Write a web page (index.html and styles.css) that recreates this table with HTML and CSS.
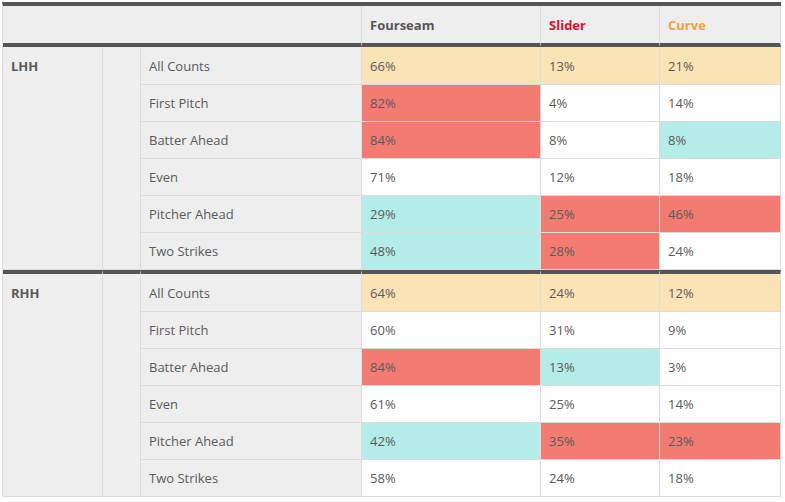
FILE: index.html
```html
<!DOCTYPE html>
<html>
<head>
<meta charset="utf-8">
<link rel="stylesheet" href="styles.css">
</head>
<body>
<div class="wrap">
<table class="grid">
  <colgroup>
    <col class="c-hand"><col class="c-blank"><col class="c-count"><col class="c-p1"><col class="c-p2"><col class="c-p3">
  </colgroup>
  <thead>
    <tr>
      <th class="gray" colspan="3"></th>
      <th class="pitch fourseam">Fourseam</th>
      <th class="pitch slider">Slider</th>
      <th class="pitch curve">Curve</th>
    </tr>
  </thead>
  <tbody class="group">
    <tr class="first"><td class="hand gray" rowspan="6">LHH</td><td class="gray" rowspan="6"></td><td class="count gray">All Counts</td><td class="yel">66%</td><td class="yel">13%</td><td class="yel">21%</td></tr>
    <tr><td class="count gray">First Pitch</td><td class="red">82%</td><td>4%</td><td>14%</td></tr>
    <tr><td class="count gray">Batter Ahead</td><td class="red">84%</td><td>8%</td><td class="cyan">8%</td></tr>
    <tr><td class="count gray">Even</td><td>71%</td><td>12%</td><td>18%</td></tr>
    <tr><td class="count gray">Pitcher Ahead</td><td class="cyan">29%</td><td class="red">25%</td><td class="red">46%</td></tr>
    <tr><td class="count gray">Two Strikes</td><td class="cyan">48%</td><td class="red">28%</td><td>24%</td></tr>
  </tbody>
  <tbody class="group">
    <tr class="first"><td class="hand gray" rowspan="6">RHH</td><td class="gray" rowspan="6"></td><td class="count gray">All Counts</td><td class="yel">64%</td><td class="yel">24%</td><td class="yel">12%</td></tr>
    <tr><td class="count gray">First Pitch</td><td>60%</td><td>31%</td><td>9%</td></tr>
    <tr><td class="count gray">Batter Ahead</td><td class="red">84%</td><td class="cyan">13%</td><td>3%</td></tr>
    <tr><td class="count gray">Even</td><td>61%</td><td>25%</td><td>14%</td></tr>
    <tr><td class="count gray">Pitcher Ahead</td><td class="cyan">42%</td><td class="red">35%</td><td class="red">23%</td></tr>
    <tr><td class="count gray">Two Strikes</td><td>58%</td><td>24%</td><td>18%</td></tr>
  </tbody>
</table>
</div>
</body>
</html>
```
FILE: styles.css
```css
html, body {
  margin: 0;
  padding: 0;
  background: #ffffff;
}
.wrap {
  padding: 2px;
}
.grid {
  border-collapse: separate;
  border-spacing: 0;
  table-layout: fixed;
  width: 779px;
  font-family: "Open Sans", "Liberation Sans", sans-serif;
  font-size: 13px;
  line-height: 18px;
  color: #5a5a5a;
  border-top: 4px solid #555555;
  border-left: 1px solid #dcdcdc;
}
.c-hand { width: 100px; }
.c-blank { width: 38px; }
.c-count { width: 221px; }
.c-p1 { width: 179px; }
.c-p2 { width: 119px; }
.c-p3 { width: 121px; }

.grid th, .grid td {
  box-sizing: border-box;
  padding: 9px 8px 9px 8px;
  text-align: left;
  vertical-align: top;
  border-right: 1px solid #dcdcdc;
  border-bottom: 1px solid #dcdcdc;
  background: #ffffff;
  white-space: nowrap;
}
.grid thead th {
  padding: 10px 8px 9px 8px;
  border-bottom: 4px solid #555555;
  background: #eeeeee;
  font-weight: 700;
}
.grid tr.first td {
  padding-top: 10px;
}
.grid tbody.group + tbody.group tr.first td {
  border-top: 4px solid #555555;
}
.grid .gray { background: #eeeeee; }
.grid .hand {
  font-weight: 700;
}
.grid .yel { background: #fae3b4; }
.grid .red { background: #f27c71; }
.grid .cyan { background: #b4ecea; }
.pitch.fourseam { color: #555555; }
.pitch.slider { color: #de0f2f; }
.pitch.curve { color: #f0a23e; }
```
